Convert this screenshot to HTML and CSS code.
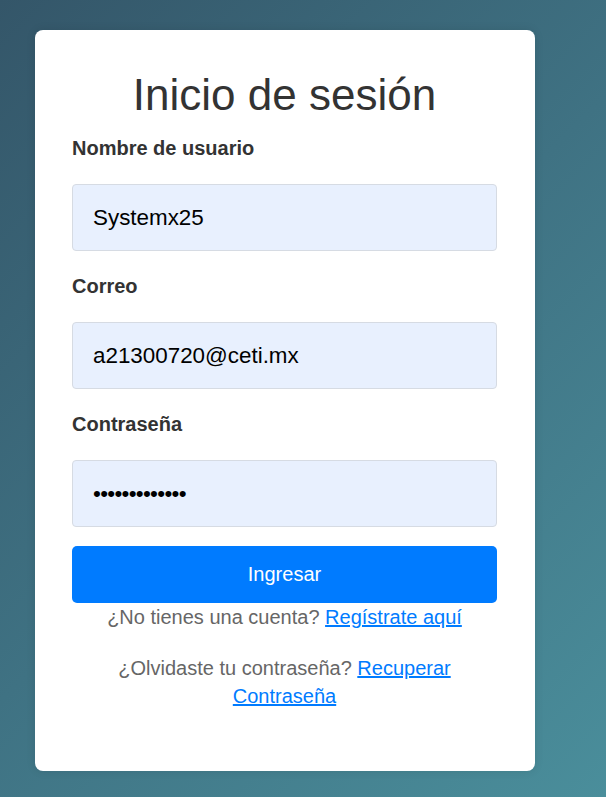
FILE: index.html
```html
<!DOCTYPE html>
<html lang="es">
<head>
<meta charset="utf-8">
<title>Inicio de sesión</title>
<link rel="stylesheet" href="styles.css">
</head>
<body>
  <div class="card">
    <h1 class="title">Inicio de sesión</h1>
    <form class="form">
      <div class="field">
        <label class="label" for="user">Nombre de usuario</label>
        <input class="input" id="user" type="text" value="Systemx25">
      </div>
      <div class="field">
        <label class="label" for="mail">Correo</label>
        <input class="input" id="mail" type="email" value="a21300720@ceti.mx">
      </div>
      <div class="field">
        <label class="label" for="pass">Contraseña</label>
        <input class="input input-pass" id="pass" type="password" value="1234567890123">
      </div>
      <button class="btn" type="button">Ingresar</button>
    </form>
    <p class="note note-first">¿No tienes una cuenta? <a class="link" href="#">Regístrate aquí</a></p>
    <p class="note note-second">¿Olvidaste tu contraseña? <a class="link" href="#">Recuperar Contraseña</a></p>
  </div>
</body>
</html>
```

FILE: styles.css
```css
html, body {
  margin: 0;
  padding: 0;
}

body {
  min-height: 100vh;
  background: linear-gradient(135deg, #345669 0%, #3f7283 50%, #4a8e9b 100%);
  font-family: "Liberation Sans", Arial, sans-serif;
  color: #333;
}

.card {
  box-sizing: border-box;
  width: 500px;
  margin: 0 0 0 35px;
  position: relative;
  top: 30px;
  padding: 40px 38px 61px 37px;
  background: #fff;
  border-radius: 8px;
  box-shadow: 0 0 10px rgba(0, 0, 0, 0.1);
}

.title {
  margin: 0;
  font-size: 44px;
  line-height: 50px;
  font-weight: normal;
  text-align: center;
  color: #333;
}

.form {
  display: flex;
  flex-direction: column;
  margin-top: 17px;
}

.field {
  display: flex;
  flex-direction: column;
  gap: 24px;
  margin-bottom: 24px;
}

.field:nth-child(3) {
  margin-bottom: 19px;
}

.label {
  font-size: 20px;
  line-height: 23px;
  font-weight: bold;
  color: #333;
}

.input {
  box-sizing: border-box;
  width: 100%;
  height: 67px;
  margin: 0;
  padding: 0 20px;
  font-family: "Liberation Sans", Arial, sans-serif;
  font-size: 22.4px;
  color: #000;
  background: #e8f0fe;
  border: 1px solid #d6dbe3;
  border-radius: 4px;
  outline: none;
}

.input-pass {
  letter-spacing: -0.7px;
}

.btn {
  width: 100%;
  height: 57px;
  margin: 0;
  border: none;
  border-radius: 5px;
  background: #007bff;
  color: #fff;
  font-family: "Liberation Sans", Arial, sans-serif;
  font-size: 20px;
  cursor: pointer;
}

.note {
  margin: 0;
  font-size: 20px;
  line-height: 28px;
  text-align: center;
  color: #666;
}

.note-second {
  margin-top: 23px;
}

.link {
  color: #007bff;
  text-decoration: underline;
}
```
